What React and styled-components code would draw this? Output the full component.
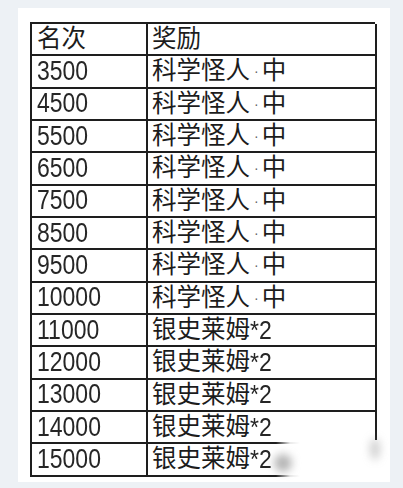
import React from "react";
import styled, { createGlobalStyle } from "styled-components";

const GlobalStyle = createGlobalStyle`
  html, body {
    margin: 0;
    padding: 0;
    background: #edf1f5;
  }
  body {
    width: 403px;
    height: 488px;
    overflow: hidden;
    font-family: "Liberation Sans", "Noto Sans CJK SC", sans-serif;
  }
`;

const Page = styled.div`
  padding: 8px 0 0 18px;
`;

const Card = styled.div`
  position: relative;
  width: 372px;
  height: 474px;
  background: #ffffff;
  box-sizing: border-box;
  padding: 14px 0 0 12px;
`;

const Table = styled.div`
  display: grid;
  grid-template-columns: 116px 229px;
  grid-template-rows: repeat(14, 32.33px);
  width: 345px;
  box-sizing: border-box;
  border-top: 2px solid #1e1e1e;
  border-left: 2px solid #1e1e1e;
`;

const Cell = styled.div`
  display: flex;
  align-items: center;
  box-sizing: border-box;
  padding-left: ${(p) => (p.$wide ? "4px" : "5px")};
  border-right: 2px solid #1e1e1e;
  border-bottom: 2px solid #1e1e1e;
  color: #1c1c1c;
  font-size: 24.5px;
  line-height: 1;
  white-space: nowrap;
  font-family: "Liberation Sans", "Noto Sans CJK SC", sans-serif;
`;

const Num = styled.span`
  display: inline-block;
  font-size: 23px;
  color: #262626;
  transform: scaleY(1.17);
  transform-origin: center;
`;

const Dot = styled.span`
  font-family: "Liberation Sans", sans-serif;
  font-size: 14px;
  margin: 0 3px 0 4px;
  color: #666;
`;

const Star = styled.span`
  display: inline-block;
  font-family: "Liberation Sans", sans-serif;
  font-size: 23px;
  color: #262626;
  transform: scaleY(1.15);
`;

const Fade = styled.div`
  position: absolute;
  left: 258px;
  top: 432px;
  width: 114px;
  height: 42px;
  background: linear-gradient(
    to right,
    rgba(255, 255, 255, 0) 0px,
    rgba(255, 255, 255, 0.9) 14px,
    #ffffff 24px
  );
`;

const Smudge = styled.div`
  position: absolute;
  left: ${(p) => p.$x}px;
  top: ${(p) => p.$y}px;
  width: ${(p) => p.$w}px;
  height: ${(p) => p.$h}px;
  border-radius: 50%;
  background: rgba(120, 120, 120, ${(p) => p.$a});
  filter: blur(4px);
`;

const rows = [
  ["3500", "m"],
  ["4500", "m"],
  ["5500", "m"],
  ["6500", "m"],
  ["7500", "m"],
  ["8500", "m"],
  ["9500", "m"],
  ["10000", "m"],
  ["11000", "s"],
  ["12000", "s"],
  ["13000", "s"],
  ["14000", "s"],
  ["15000", "s"],
];

function Reward({ kind }) {
  if (kind === "m") {
    return (
      <>
        科学怪人<Dot>·</Dot>中
      </>
    );
  }
  return (
    <>
      银史莱姆<Star>*2</Star>
    </>
  );
}

export default function App() {
  return (
    <Page>
      <GlobalStyle />
      <Card>
        <Table>
          <Cell>名次</Cell>
          <Cell $wide>奖励</Cell>
          {rows.map(([rank, kind]) => (
            <React.Fragment key={rank}>
              <Cell>
                <Num>{rank}</Num>
              </Cell>
              <Cell $wide>
                <Reward kind={kind} />
              </Cell>
            </React.Fragment>
          ))}
        </Table>
        <Fade />
        <Smudge $x={256} $y={446} $w={18} $h={18} $a={0.55} />
        <Smudge $x={352} $y={430} $w={10} $h={22} $a={0.35} />
      </Card>
    </Page>
  );
}
